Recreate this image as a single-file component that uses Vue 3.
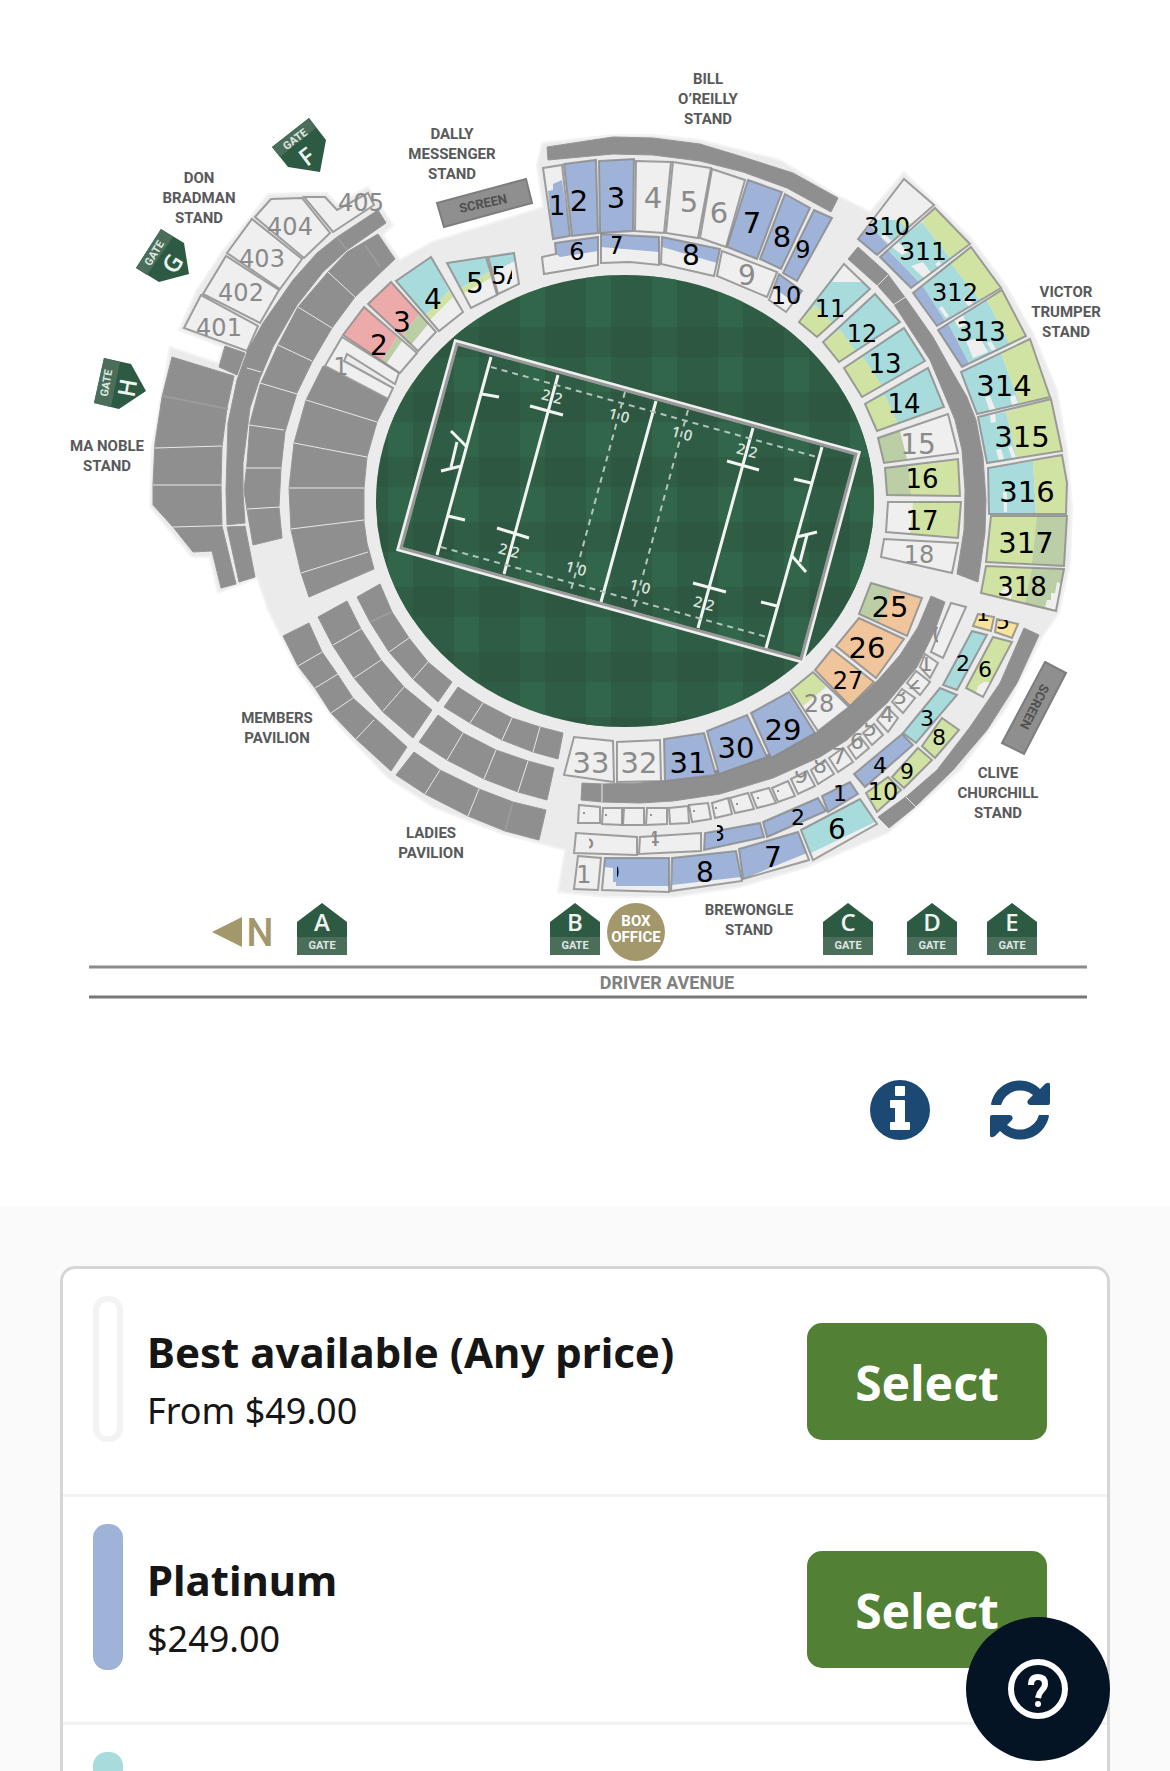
<script setup>
// Seat categories: p platinum, g gold, s silver, b bronze, r red, o orange, y yellow, n not on sale
const blocks = [
  // Don Bradman stand
  { label: '401', x: 219, y: 327, size: 24, points: '184,328 201,295 258,326 247,351', type: 'n' },
  { label: '402', x: 241, y: 292, size: 24, points: '203,294 226,256 279,290 260,323', type: 'n' },
  { label: '403', x: 262, y: 258, size: 24, points: '227,253 252,219 302,259 280,289', type: 'n' },
  { label: '404', x: 290, y: 226, size: 24, points: '255,217 271,199 302,198 330,233 304,258', type: 'n' },
  { label: '405', x: 361, y: 202, size: 24, points: '304,197 325,197 337,210 368,193 374,205 333,232', type: 'n' },

  // Dally Messenger stand
  { label: '1', x: 341, y: 366, size: 24, points: '342,337 399,373 395,384 347,354 344,361 393,388 388,399 325,366', type: 'n' },
  { label: '2', x: 379, y: 345, size: 28, points: '364,307 343,335 400,373 417,353', bands: [['r', '364,307 343,335 382,361 397,337'], ['b', '382,361 397,337 402,341 386,364']] },
  { label: '3', x: 402, y: 322, size: 28, points: '391,282 368,304 418,351 436,332', bands: [['r', '391,282 368,304 402,336 420,313'], ['b', '402,336 420,313 429,323 411,345']] },
  { label: '4', x: 433, y: 299, size: 28, points: '431,257 396,281 439,331 463,312', bands: [['g', '431,257 396,281 426,315 449,291'], ['s', '426,315 449,291 453,297 430,320']] },
  { label: '5', x: 475, y: 283, size: 28, points: '447,263 486,257 497,295 471,308', bands: [['g', '447,263 486,257 489,272 461,288'], ['s', '461,288 489,272 491,278 464,293']] },
  { label: '5A', x: 507, y: 275, size: 24, points: '488,257 514,253 519,284 498,294', bands: [['g', '488,257 514,253 515,261 493,272']], clip: [485, 250, 27, 50] },

  // Bill O'Reilly stand
  { label: '1', x: 557, y: 206, size: 26, points: '543,168 562,165 570,236 553,239', bands: [['p', '548,191 553,190 553,184 562,180 570,236 553,239']] },
  { label: '2', x: 579, y: 201, size: 29, points: '564,164 596,160 598,233 572,236', type: 'p' },
  { label: '3', x: 616, y: 198, size: 29, points: '599,161 634,159 633,231 600,233', type: 'p' },
  { label: '4', x: 653, y: 198, size: 29, points: '636,161 671,162 664,233 635,231', type: 'n' },
  { label: '5', x: 689, y: 202, size: 29, points: '673,162 711,168 698,238 666,233', type: 'n' },
  { label: '6', x: 719, y: 213, size: 29, points: '712,169 745,180 726,247 700,238', type: 'n' },
  { label: '7', x: 752, y: 223, size: 29, points: '748,180 782,192 757,259 727,247', type: 'p' },
  { label: '8', x: 782, y: 237, size: 29, points: '785,194 810,208 781,269 760,259', type: 'p' },
  { label: '9', x: 803, y: 249, size: 24, points: '814,210 832,218 797,281 783,273', type: 'p' },
  { label: '10', x: 786, y: 295, size: 24, points: '779,274 802,291 786,312 769,300', bands: [['p', '779,274 802,291 795,303 774,288']] },
  { label: '9', x: 747, y: 275, size: 28, points: '722,251 777,272 767,297 717,276', type: 'n' },
  { label: '8', x: 691, y: 255, size: 28, points: '662,237 720,249 714,276 661,264', bands: [['p', '662,237 720,249 717,263 662,247']] },
  { label: '7', x: 616, y: 245, size: 24, points: '601,234 659,237 659,265 630,262 601,263', bands: [['p', '601,234 659,237 659,252 601,247']], clip: [612, 236, 12, 24] },
  { label: '6', x: 577, y: 251, size: 24, points: '555,243 598,237 598,265 544,274 542,257 556,254', bands: [['p', '555,243 598,237 598,251 560,257 556,254']] },

  // Victor Trumper stand, upper
  { label: '310', x: 887, y: 226, size: 24, points: '904,179 934,205 877,255 858,239', bands: [['p', '858,239 877,255 888,245 870,225'], ['g', '870,225 888,245 907,228 897,220 875,220'], ['s', '897,220 907,228 911,224 905,219'], ['n', '881,237 889,244 892,241 884,234']] },
  { label: '311', x: 923, y: 251, size: 25, points: '935,208 970,244 911,288 880,257', bands: [['p', '880,257 888,250 919,282 911,288'], ['g', '888,250 922,222 950,258 919,282'], ['s', '922,222 935,208 970,244 950,258'], ['n', '911,266 923,262 931,273 924,278'], ['n', '892,247 898,242 908,252 902,255'], ['n', '935,264 939,261 947,270 943,273']] },
  { label: '312', x: 955, y: 292, size: 24, points: '971,247 1001,288 937,326 913,293', bands: [['p', '913,293 923,286 945,321 937,326'], ['g', '923,286 950,262 980,300 945,321'], ['s', '950,262 971,247 1001,288 980,300'], ['n', '939,308 942,306 949,316 946,318'], ['n', '963,299 967,296 973,304 969,307']] },
  { label: '313', x: 981, y: 332, size: 26, points: '1002,290 1026,336 962,367 938,330', bands: [['p', '938,330 948,323 969,363 962,367'], ['g', '948,323 987,300 1010,345 969,363'], ['s', '987,300 1002,290 1026,336 1010,345'], ['n', '966,341 980,338 988,352 973,358'], ['n', '954,320 963,315 967,325 959,328'], ['n', '987,343 991,341 996,349 992,351']] },
  { label: '314', x: 1004, y: 386, size: 29, points: '1030,339 1050,397 977,414 961,372', bands: [['g', '961,372 1001,353 1020,404 977,414'], ['s', '1001,353 1030,339 1050,397 1020,404'], ['n', '985,397 990,396 996,411 990,412'], ['n', '1010,397 1015,395 1018,403 1012,405']] },
  { label: '315', x: 1022, y: 437, size: 29, points: '1051,399 1062,451 987,463 978,417', bands: [['g', '978,417 1006,412 1017,458 987,463'], ['s', '1006,412 1051,399 1062,451 1017,458'], ['n', '990,415 995,413 996,422 991,423'], ['n', '996,450 1001,449 1004,459 999,460'], ['n', '1008,447 1012,446 1016,457 1012,458']] },
  { label: '316', x: 1027, y: 492, size: 29, points: '1062,455 1067,483 1066,514 989,514 988,468', bands: [['g', '988,468 1033,461 1036,514 989,514'], ['s', '1033,461 1062,455 1067,483 1066,514 1036,514'], ['n', '1003,492 1007,492 1007,512 1004,512']] },
  { label: '317', x: 1026, y: 543, size: 29, points: '991,516 1067,516 1064,566 986,562', type: 's', bands: [['b', '1037,516 1067,516 1064,566 1032,564']] },
  { label: '318', x: 1022, y: 587, size: 26, points: '986,566 1064,569 1056,611 981,593', type: 's', bands: [['b', '1032,568 1064,569 1056,611 1025,604'], ['n', '1057,582 1061,584 1056,610 1045,607 1047,600 1051,600 1051,593 1055,593'], ['n', '999,594 1006,586 1012,588 1011,599']] },

  // Victor Trumper stand, lower
  { label: '11', x: 830, y: 308, size: 24, points: '844,264 870,289 817,337 799,322', type: 'g', bands: [['n', '832,282 844,264 863,282'], ['s', '815,305 833,323 817,337 799,322']] },
  { label: '12', x: 862, y: 333, size: 24, points: '875,294 900,322 839,362 823,342', type: 'g', bands: [['s', '840,329 856,352 839,362 823,342']] },
  { label: '13', x: 885, y: 364, size: 26, points: '904,328 925,361 862,397 844,368', type: 'g', bands: [['s', '863,357 882,385 862,397 844,368']] },
  { label: '14', x: 904, y: 404, size: 26, points: '928,368 944,407 877,431 865,404', type: 'g', bands: [['s', '885,395 898,423 877,431 865,404']] },
  { label: '15', x: 918, y: 444, size: 28, points: '948,414 958,453 884,463 878,438', type: 'n', bands: [['b', '900,431 907,459 884,463 878,438']] },
  { label: '16', x: 922, y: 479, size: 26, points: '958,459 960,496 887,495 885,468', type: 's', bands: [['b', '908,465 911,495 887,495 885,468']] },
  { label: '17', x: 922, y: 521, size: 26, points: '961,502 958,538 886,532 888,502', type: 's', bands: [['n', '913,502 910,534 886,532 888,502']] },
  { label: '18', x: 919, y: 554, size: 24, points: '958,543 952,573 881,557 884,539', type: 'n' },

  // Brewongle and Clive Churchill stands, ground level
  { label: '25', x: 890, y: 607, size: 29, points: '871,583 922,598 907,636 859,614', type: 'o', bands: [['b', '871,583 892,589 879,623 859,614']] },
  { label: '26', x: 867, y: 648, size: 29, points: '859,618 904,639 876,678 836,646', type: 'o' },
  { label: '27', x: 848, y: 680, size: 24, points: '832,649 874,682 850,706 815,670', type: 'o' },
  { label: '28', x: 819, y: 703, size: 24, points: '813,672 849,707 818,731 791,690', bands: [['s', '813,672 826,687 803,706 791,690']], muted: true },
  { label: '29', x: 783, y: 730, size: 29, points: '789,692 815,733 771,758 751,713', type: 'p' },
  { label: '30', x: 736, y: 748, size: 29, points: '747,715 767,757 719,774 707,731', type: 'p' },
  { label: '31', x: 688, y: 763, size: 29, points: '704,733 716,775 665,781 664,739', type: 'p' },
  { label: '32', x: 639, y: 763, size: 29, points: '660,740 661,781 617,782 617,742', type: 'n' },
  { label: '33', x: 591, y: 763, size: 29, points: '613,741 614,782 564,775 574,737', type: 'n' },

  // Corporate boxes
  { points: '579,805 600,807 600,823 578,823', type: 'n', dot: [584, 813] },
  { points: '603,808 622,808 622,825 602,824', type: 'n', dot: [606, 815] },
  { points: '624,808 644,808 644,825 623,825', type: 'n' },
  { points: '647,808 667,808 667,824 646,825', type: 'n', dot: [651, 815] },
  { points: '669,808 688,806 689,823 670,824', type: 'n' },
  { points: '689,805 708,803 711,819 692,822', type: 'n', dot: [694, 811] },
  { points: '712,803 728,798 732,814 715,818', type: 'n', dot: [716, 808] },
  { points: '730,798 748,793 754,809 735,813', type: 'n', dot: [737, 804] },
  { points: '751,793 769,788 776,803 757,808', type: 'n', dot: [758, 798] },
  { points: '772,788 788,781 795,796 778,802', type: 'n', dot: [778, 791] },
  { label: '9', x: 801, y: 775, size: 22, points: '791,779 807,771 815,786 798,794', type: 'n', clip: [790, 771, 24, 20] },
  { label: '8', x: 820, y: 765, size: 22, points: '811,770 825,760 834,774 818,784', type: 'n', clip: [808, 760, 24, 20] },
  { label: '7', x: 839, y: 756, size: 22, points: '829,758 843,748 853,762 838,772', type: 'n', clip: [830, 748, 24, 20] },
  { label: '6', x: 857, y: 741, size: 22, points: '848,747 860,737 869,748 856,759', type: 'n' },
  { label: '5', x: 870, y: 728, size: 22, points: '863,733 874,724 883,735 872,745', type: 'n', clip: [860, 723, 24, 20] },
  { label: '4', x: 887, y: 714, size: 22, points: '877,720 887,707 898,718 888,732', type: 'n' },
  { label: '3', x: 900, y: 696, size: 22, points: '892,702 902,689 915,698 903,713', type: 'n', clip: [890, 692, 24, 20] },
  { label: '2', x: 915, y: 681, size: 22, points: '907,683 916,671 930,682 920,695', type: 'n', clip: [908, 680, 24, 20] },
  { label: '1', x: 926, y: 663, size: 22, points: '920,667 925,654 938,663 930,678', type: 'n', clip: [916, 657, 24, 20] },
  { label: '0', x: 940, y: 634, size: 24, points: '951,603 966,607 943,658 931,652 943,622', type: 'n', clip: [929, 627, 9, 17] },

  // Clive Churchill stand
  { label: '1', x: 983, y: 613, size: 22, points: '978,614 994,617 991,631 973,626', type: 'y', clip: [970, 613, 24, 20] },
  { label: '5', x: 1003, y: 621, size: 22, points: '997,619 1018,624 1012,638 995,632', type: 'y', clip: [992, 620, 24, 20] },
  { label: '2', x: 963, y: 663, size: 22, points: '972,631 987,635 957,690 943,685', type: 'g' },
  { label: '6', x: 985, y: 669, size: 22, points: '993,637 1012,642 983,697 966,688', type: 's', bands: [['n', '976,693 978,686 984,682 991,682 983,697']] },
  { label: '3', x: 927, y: 718, size: 22, points: '940,688 957,695 916,743 903,733', type: 'g' },
  { label: '8', x: 939, y: 737, size: 22, points: '942,718 959,730 935,758 922,746', type: 's' },
  { label: '4', x: 880, y: 765, size: 22, points: '902,734 913,745 865,787 854,774', type: 'p' },
  { label: '9', x: 907, y: 771, size: 22, points: '918,748 932,760 904,788 892,777', type: 's' },
  { label: '10', x: 883, y: 791, size: 24, points: '888,777 901,790 877,812 866,793', type: 's' },

  // Brewongle stand
  { label: '1', x: 840, y: 793, size: 22, points: '850,782 858,794 828,812 822,796', type: 'p' },
  { label: '2', x: 798, y: 817, size: 22, points: '818,798 826,811 767,837 763,822', type: 'p' },
  { label: '3', x: 718, y: 833, size: 22, points: '760,823 764,837 704,850 705,833', type: 'p', clip: [717, 822, 12, 22] },
  { label: '4', x: 653, y: 839, size: 22, points: '701,833 701,851 639,854 640,837', type: 'n', clip: [652, 830, 8, 16] },
  { label: '5', x: 588, y: 841, size: 22, points: '637,837 637,855 574,853 576,833', type: 'n', clip: [589, 836, 8, 14] },
  { label: '1', x: 584, y: 874, size: 24, points: '578,856 601,858 598,890 574,889', type: 'n' },
  { label: '9', x: 613, y: 872, size: 22, points: '605,858 669,858 669,892 602,890', bands: [['p', '605,858 669,858 669,886 616,886 616,882 613,882 613,868 604,867']], clip: [617, 866, 8, 12] },
  { label: '8', x: 705, y: 872, size: 28, points: '672,858 736,851 742,881 671,891', bands: [['p', '672,858 736,851 741,877 672,885']] },
  { label: '7', x: 773, y: 857, size: 28, points: '739,849 798,832 809,860 743,879', bands: [['p', '739,849 798,832 807,853 743,879']] },
  { label: '6', x: 837, y: 829, size: 28, points: '801,830 860,799 877,824 813,860', bands: [['g', '801,830 860,799 875,822 811,853']] },
]

const ground =
  '179,330 197,290 222,252 252,215 268,194 305,193 327,193 337,204 368,187 375,197 393,225 383,235 400,260 432,242 543,207 537,165 542,143 613,135 653,135 700,140 780,160 840,197 870,212 904,172 970,237 1007,287 1033,333 1057,390 1067,450 1072,507 1070,563 1059,613 1042,637 1007,707 960,770 888,833 807,867 740,887 673,897 607,897 558,892 565,850 500,833 433,807 387,777 340,727 300,673 283,640 268,610 257,578 218,593 210,557 192,557 150,507 152,447 170,347 218,363 223,347'

// Closed areas, no seats for sale
const closed = [
  '378,210 386,223 347,250 323,272 297,305 273,347 260,378 250,408 243,463 243,493 245,523 227,525 226,490 228,423 237,380 247,352 263,323 293,280 317,253 337,237',
  '227,527 245,526 255,577 239,582',
  '225,346 245,353 237,375 219,367',
  '378,234 395,259 355,297 332,328 312,362 297,393 285,432 281,468 279,507 282,538 253,545 247,510 244,490 247,463 250,423 260,385 278,345 298,307 328,272 347,252',
  '323,366 388,400 377,422 367,457 364,488 364,522 367,543 374,569 309,597 301,573 291,530 289,488 294,443 306,400',
  '172,357 234,376 227,408 222,447 221,485 222,526 236,584 221,588 212,551 193,552 173,527 153,505 153,485 155,443 162,397',
  '283,636 309,623 322,652 338,675 353,698 375,718 407,747 391,771 356,739 331,713 315,688 298,666',
  '318,617 347,601 361,629 381,660 404,687 432,710 413,738 383,712 354,678 333,646',
  '357,597 380,584 392,612 409,638 428,662 452,682 438,702 413,679 389,652 370,622',
  '458,687 483,703 512,718 540,727 563,733 558,759 533,752 502,740 470,723 444,707',
  '438,715 463,733 496,750 528,761 554,768 547,800 518,792 484,779 447,760 419,742',
  '414,752 440,770 479,789 513,802 546,810 539,840 505,831 468,816 425,794 396,775',
  '547,147 613,137 653,138 700,144 743,157 793,173 838,198 831,212 787,188 743,172 700,161 653,155 613,154 548,160',
  '858,247 887,273 907,300 933,337 953,373 967,397 976,420 983,457 986,500 985,533 978,582 957,574 964,530 965,490 962,450 955,420 948,403 930,360 893,303 877,285 848,259',
  '931,596 945,602 935,630 917,667 887,703 847,740 820,757 773,778 720,794 673,801 640,803 602,802 581,800 582,783 602,784 640,783 680,779 727,768 773,753 817,732 857,700 878,680 900,655 918,627',
  '1024,628 1039,635 1017,683 987,730 953,770 915,807 889,828 878,817 907,796 937,770 970,727 1000,683',
]

const aisles =
  'M328 272L355 297M298 307L332 328M278 345L312 361M260 383L297 394M249 425L284 430M246 468H281M247 509L280 507M306 400L377 422M294 443L367 457M289 488H364M291 529L364 520M301 573L368 552M155 448L222 446M153 485H221M173 527L245 525M247 368L261 372M298 666L322 652M315 688L338 674M331 713L353 698M356 739L374 720M333 645L361 629M354 678L381 660M383 711L404 687M389 652L409 638M413 679L428 662M470 723L483 703M502 740L512 718M533 752L540 727M447 760L463 733M484 779L496 750M518 792L528 761M425 794L440 770M468 816L479 789M877 286L888 275M893 305L907 296M602 784V802M906 797L916 807'

const pitchLines =
  'M491 357L437 555M558 375L504 574M656 401L601 602M753 428L698 628M822 447L766 648M482 394L499 397M448 516L465 520M530 406L563 415M497 528L529 538M727 461L759 470M693 583L726 592M794 479L811 483M761 602L777 606M451 431L467 447M441 471L461 466M457 442L451 467M797 537L817 532M792 556L806 572M807 535L800 562'

const pitchNumbers = [
  ['2 2', 552, 397], ['2 2', 509, 551], ['2 2', 747, 451], ['2 2', 704, 604],
  ['1 0', 619, 416], ['1 0', 682, 434], ['1 0', 576, 569], ['1 0', 640, 587],
]

const stands = [
  { x: 199, y: 183, lines: ['DON', 'BRADMAN', 'STAND'] },
  { x: 452, y: 139, lines: ['DALLY', 'MESSENGER', 'STAND'] },
  { x: 708, y: 84, lines: ['BILL', 'O’REILLY', 'STAND'] },
  { x: 1066, y: 297, lines: ['VICTOR', 'TRUMPER', 'STAND'] },
  { x: 107, y: 451, lines: ['MA NOBLE', 'STAND'] },
  { x: 277, y: 723, lines: ['MEMBERS', 'PAVILION'] },
  { x: 431, y: 838, lines: ['LADIES', 'PAVILION'] },
  { x: 749, y: 915, lines: ['BREWONGLE', 'STAND'] },
  { x: 998, y: 778, lines: ['CLIVE', 'CHURCHILL', 'STAND'] },
]

const gates = [
  { name: 'A', x: 322 },
  { name: 'B', x: 575 },
  { name: 'C', x: 848 },
  { name: 'D', x: 932 },
  { name: 'E', x: 1012 },
]

const cornerGates = [
  { name: 'F', shape: '272,147 309,118 326,140 320,172 288,167', base: '272,147 309,118 316,128 280,157', gx: 295, gy: 139, x: 307, y: 157, angle: -37 },
  { name: 'G', shape: '161,229 184,243 189,274 159,282 136,268', base: '161,229 173,237 147,275 136,268', gx: 154, gy: 253, x: 173, y: 264, angle: -58 },
  { name: 'H', shape: '104,358 131,364 146,391 119,409 94,403', base: '104,358 120,362 111,407 94,403', gx: 106, gy: 383, x: 128, y: 388, angle: -80 },
]

const refreshArrow =
  'M2 25Q1 25 1 24A29 29 0 0 1 50 9L55 4Q60 1 60 5V23Q60 25 58 25H40Q36 24 38 20L43 15A20 20 0 0 0 11 25Z'

const prices = [
  { name: 'Best available (Any price)', price: 'From $49.00', swatch: 'any' },
  { name: 'Platinum', price: '$249.00', swatch: 'platinum' },
  { name: '', price: '', swatch: 'teal' },
]

function isMuted(block) {
  return block.muted || block.type === 'n'
}
</script>

<template>
  <main class="page">
    <section class="venue">
      <svg class="map" viewBox="0 0 1170 1020" role="img">
        <defs>
          <clipPath id="oval"><ellipse cx="625" cy="501" rx="249" ry="226" /></clipPath>
          <template v-for="(block, i) in blocks" :key="i">
            <clipPath v-if="block.clip" :id="'label-' + i">
              <rect :x="block.clip[0]" :y="block.clip[1]" :width="block.clip[2]" :height="block.clip[3]" />
            </clipPath>
          </template>
        </defs>

        <polygon class="ground" :points="ground" />

        <g clip-path="url(#oval)">
          <rect class="grass" x="370" y="270" width="510" height="460" />
          <rect v-for="n in 8" :key="'c' + n" class="grass-light" :x="322 + n * 66" y="270" width="25" height="460" />
          <rect v-for="n in 7" :key="'r' + n" class="grass-dark" x="370" :y="262 + n * 65" width="510" height="30" />
        </g>

        <polygon class="pitch-edge" points="456,342 858,453 802,661 399,549" />
        <polygon class="pitch-rail" points="457,344 856,454 801,659 401,548" />
        <path class="pitch-line" :d="pitchLines" />
        <path class="pitch-dash" d="M491 367L817 457M441 547L767 637M625 392L571 590M688 410L634 608" />
        <text
          v-for="([text, x, y], i) in pitchNumbers"
          :key="'n' + i"
          class="pitch-number"
          :transform="`translate(${x} ${y}) rotate(15)`"
          y="5"
        >{{ text }}</text>

        <polygon v-for="(points, i) in closed" :key="'s' + i" class="closed" :points="points" />
        <path class="aisle" :d="aisles" />
        <path class="aisle-dark" d="M163 396L228 409M365 245L380 267M370 622L392 612M505 831L513 802M337 237L347 250" />

        <g v-for="(block, i) in blocks" :key="'b' + i">
          <polygon :class="'seat-' + (block.type || 'n')" :points="block.points" />
          <polygon v-for="([type, points], j) in block.bands" :key="j" :class="'seat-' + type" :points="points" />
          <polygon class="seat-edge" :points="block.points" />
          <circle v-if="block.dot" class="dot" :cx="block.dot[0]" :cy="block.dot[1]" r="1" />
        </g>
        <template v-for="(block, i) in blocks" :key="'l' + i">
          <g v-if="block.label" :clip-path="block.clip ? `url(#label-${i})` : null">
            <text
              class="seat-label"
              :class="{ muted: isMuted(block) }"
              :x="block.x"
              :y="block.y + Math.round(block.size * 0.36)"
              :font-size="block.size"
            >{{ block.label }}</text>
          </g>
        </template>

        <polygon class="screen" points="437,203 526,179 532,203 444,227" />
        <text class="screen-label" transform="translate(483 203) rotate(-12)" y="5">SCREEN</text>
        <polygon class="screen" points="1045,662 1066,673 1024,754 1002,743" />
        <text class="screen-label" transform="translate(1035 707) rotate(117)" y="5">SCREEN</text>

        <text v-for="stand in stands" :key="stand.x" class="stand">
          <tspan v-for="(line, i) in stand.lines" :key="i" :x="stand.x" :y="stand.y + i * 20">{{ line }}</tspan>
        </text>

        <g v-for="gate in cornerGates" :key="gate.name">
          <polygon class="gate" :points="gate.shape" />
          <polygon class="gate-base" :points="gate.base" />
          <text class="gate-word" :transform="`translate(${gate.gx} ${gate.gy}) rotate(${gate.angle})`" y="4">GATE</text>
          <text class="gate-name" :transform="`translate(${gate.x} ${gate.y}) rotate(${gate.angle})`" y="8">{{ gate.name }}</text>
        </g>
        <g v-for="gate in gates" :key="gate.name" :transform="`translate(${gate.x} 903)`">
          <polygon class="gate" points="0,0 25,19 25,52 -25,52 -25,19" />
          <rect class="gate-base" x="-25" y="34" width="50" height="18" />
          <text class="gate-name" y="28">{{ gate.name }}</text>
          <text class="gate-word" y="46">GATE</text>
        </g>

        <circle class="gold" cx="636" cy="932" r="29" />
        <text class="box-office">
          <tspan x="636" y="926">BOX</tspan>
          <tspan x="636" y="942">OFFICE</tspan>
        </text>
        <path class="gold" d="M212 932L242 917V947Z" />
        <text class="north" x="260" y="946">N</text>

        <path class="road" d="M89 967H1087" />
        <path class="road road-near" d="M89 997H1087" />
        <text class="road-name" x="667" y="989">DRIVER AVENUE</text>
      </svg>

      <div class="tools">
        <button class="tool" type="button" aria-label="Information">
          <svg viewBox="0 0 60 60">
            <path
              fill-rule="evenodd"
              d="M30 0a30 30 0 1 0 0 60a30 30 0 1 0 0-60ZM26 6h8q1 0 1 1v8q0 1-1 1h-8q-1 0-1-1V7q0-1 1-1ZM21 20h13q1 0 1 1v21h4q1 0 1 1v6q0 1-1 1H21q-1 0-1-1v-6q0-1 1-1h4V28h-4q-1 0-1-1v-6q0-1 1-1Z"
            />
          </svg>
        </button>
        <button class="tool" type="button" aria-label="Refresh">
          <svg viewBox="0 0 60 60">
            <path :d="refreshArrow" />
            <path transform="rotate(180 30 30)" :d="refreshArrow" />
          </svg>
        </button>
      </div>
    </section>

    <ul class="prices">
      <li v-for="item in prices" :key="item.swatch" class="price">
        <span class="swatch" :class="item.swatch"></span>
        <div v-if="item.name" class="details">
          <h2>{{ item.name }}</h2>
          <p>{{ item.price }}</p>
        </div>
        <button v-if="item.name" class="select" type="button">Select</button>
      </li>
    </ul>

    <button class="help" type="button" aria-label="Help">
      <svg viewBox="0 0 60 60">
        <circle cx="30" cy="30" r="27" />
        <path d="M23 26Q23 18 30 18T37 25Q37 28 34 31T30 39" />
        <circle class="help-dot" cx="30" cy="45" r="3" />
      </svg>
    </button>
  </main>
</template>

<style>
body {
  margin: 0;
}
</style>

<style scoped>
.page {
  height: 100vh;
  overflow: hidden;
  background: #fafafa;
  color: #161616;
  font-family: 'Noto Sans', 'Open Sans', sans-serif;
}

button {
  border: 0;
  font-family: inherit;
  cursor: pointer;
}

.venue {
  background: #fff;
}

.map {
  display: block;
  width: 100%;
}

.map text {
  text-anchor: middle;
}

.ground {
  fill: #ebebeb;
  stroke: #f3f3f3;
  stroke-width: 2;
}

.grass {
  fill: #2f5c44;
}

.grass-light {
  fill: #33694c;
  opacity: 0.8;
}

.grass-dark {
  fill: #264735;
  opacity: 0.25;
}

.pitch-edge {
  fill: none;
  stroke: #efefef;
  stroke-width: 5;
}

.pitch-rail {
  fill: none;
  stroke: #999;
  stroke-width: 3;
}

.pitch-line {
  fill: none;
  stroke: #f2f4f2;
  stroke-width: 3;
}

.pitch-dash {
  fill: none;
  stroke: #b4c5bb;
  stroke-width: 2;
  stroke-dasharray: 6 5;
}

.pitch-number {
  fill: #d9e2dc;
  font: 600 15px 'Open Sans', sans-serif;
}

.closed {
  fill: #8f8f8f;
  stroke: #959595;
  stroke-width: 1;
}

.aisle {
  fill: none;
  stroke: #e8e8e8;
  stroke-width: 1;
}

.aisle-dark {
  fill: none;
  stroke: #9b9b9b;
  stroke-width: 2;
}

.seat-n {
  fill: #efefef;
}

.seat-p {
  fill: #9fb2d7;
}

.seat-g {
  fill: #a8dcdc;
}

.seat-s {
  fill: #d1e3a3;
}

.seat-b {
  fill: #bbcea6;
}

.seat-r {
  fill: #ecabaa;
}

.seat-o {
  fill: #f1c59b;
}

.seat-y {
  fill: #f9e29b;
}

.seat-edge {
  fill: none;
  stroke: #888;
  stroke-opacity: 0.8;
  stroke-width: 2;
}

.dot {
  fill: #777;
}

.seat-label {
  fill: #000;
  font-family: 'DejaVu Sans', sans-serif;
}

.seat-label.muted {
  fill: #8a8a8a;
}

.screen {
  fill: #8f8f8f;
  stroke: #7d7d7d;
  stroke-width: 2;
}

.screen-label {
  fill: #505050;
  font: 700 13px Roboto, sans-serif;
}

.stand {
  fill: #58595b;
  font: 700 15px Roboto, sans-serif;
}

.gate {
  fill: #2d5a42;
}

.gate-base {
  fill: #4b6e5a;
}

.gate-name {
  fill: #eef3ef;
  font: 600 24px 'Open Sans', sans-serif;
}

.gate-word {
  fill: #dfe7e1;
  font: 700 11px Roboto, sans-serif;
}

.gold {
  fill: #a3976c;
}

.box-office {
  fill: #fff;
  font: 700 15px Roboto, sans-serif;
}

.north {
  fill: #a3976c;
  font: 500 38px Roboto, sans-serif;
}

.road {
  stroke: #8b8b8b;
  stroke-width: 3;
}

.road-near {
  stroke: #77777a;
}

.road-name {
  fill: #808080;
  font: 700 18px Roboto, sans-serif;
}

.tools {
  display: flex;
  justify-content: flex-end;
  gap: 60px;
  padding: 60px 120px 66px;
}

.tool {
  width: 60px;
  height: 60px;
  padding: 0;
  background: none;
  fill: #1c4874;
}

.tool svg {
  display: block;
}

.prices {
  margin: 60px 60px 0;
  padding: 0;
  border: 3px solid #d6d6d6;
  border-radius: 15px;
  background: #fff;
  list-style: none;
}

.price {
  display: flex;
  align-items: center;
  gap: 24px;
  min-height: 225px;
  padding: 0 60px 0 30px;
  border-bottom: 3px solid #f2f2f2;
}

.swatch {
  box-sizing: border-box;
  align-self: flex-start;
  width: 30px;
  height: 146px;
  margin-top: 27px;
  border-radius: 14px;
}

.any {
  border: 6px solid #f3f3f3;
}

.platinum {
  background: #9fb2d7;
}

.teal {
  background: #a8dcdc;
}

.details {
  flex: 1;
}

.details h2 {
  margin: 0;
  font-size: 42px;
  font-weight: 700;
  line-height: 58px;
}

.details p {
  margin: 0;
  font-size: 36px;
  line-height: 60px;
}

.select {
  width: 240px;
  height: 117px;
  padding: 2px 0 0;
  border-radius: 15px;
  background: #528135;
  color: #fff;
  font-size: 48px;
  font-weight: 700;
}

.help {
  position: fixed;
  right: 60px;
  bottom: 10px;
  display: flex;
  align-items: center;
  justify-content: center;
  width: 144px;
  height: 144px;
  border-radius: 50%;
  background: #041424;
}

.help svg {
  width: 60px;
  height: 60px;
  fill: none;
  stroke: #fff;
  stroke-width: 6;
}

.help .help-dot {
  fill: #fff;
  stroke: none;
}
</style>
